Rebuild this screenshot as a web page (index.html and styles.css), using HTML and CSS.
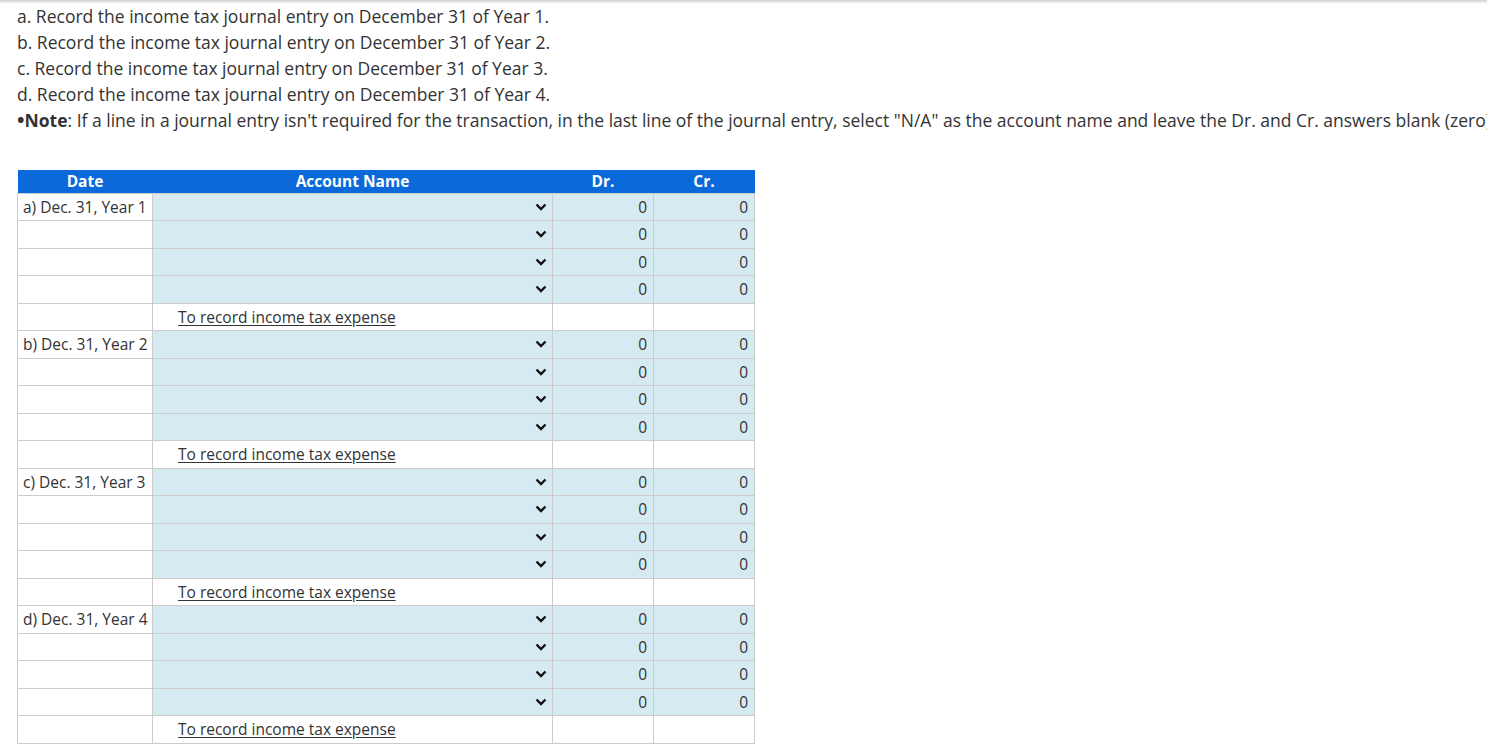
FILE: index.html
```html
<!DOCTYPE html>
<html>
<head>
<meta charset="utf-8">
<link rel="stylesheet" href="styles.css">
</head>
<body>
<div class="topbar"></div>
<div class="page">
  <div class="instructions">
    <p>a. Record the income tax journal entry on December 31 of Year 1.</p>
    <p>b. Record the income tax journal entry on December 31 of Year 2.</p>
    <p>c. Record the income tax journal entry on December 31 of Year 3.</p>
    <p>d. Record the income tax journal entry on December 31 of Year 4.</p>
    <p class="note"><b class="bullet">&bull;</b><b>Note</b>: If a line in a journal entry isn't required for the transaction, in the last line of the journal entry, select "N/A" as the account name and leave the Dr. and Cr. answers blank (zero).</p>
  </div>
  <table class="journal">
    <colgroup><col class="c-date"><col class="c-acct"><col class="c-num"><col class="c-num2"></colgroup>
    <thead>
      <tr><th>Date</th><th>Account Name</th><th>Dr.</th><th>Cr.</th></tr>
    </thead>
    <tbody id="body"></tbody>
  </table>
</div>
<script>
  var labels = ["a) Dec. 31, Year 1","b) Dec. 31, Year 2","c) Dec. 31, Year 3","d) Dec. 31, Year 4"];
  var chev = '<svg class="chev" width="12" height="8" viewBox="0 0 12 8"><polyline points="1.5,1.5 6,6 10.5,1.5" fill="none" stroke="#111" stroke-width="2.4"/></svg>';
  var html = "";
  labels.forEach(function(l){
    for (var i=0;i<4;i++){
      html += '<tr><td class="date">'+(i===0?l:'')+'</td><td class="input acct"><div class="sel">'+chev+'</div></td><td class="input num">0</td><td class="input num">0</td></tr>';
    }
    html += '<tr><td class="date"></td><td class="memo"><span>To record income tax expense</span></td><td></td><td></td></tr>';
  });
  document.getElementById("body").innerHTML = html;
</script>
</body>
</html>
```
FILE: styles.css
```css
html, body { margin: 0; padding: 0; background: #fff; }
body {
  font-family: "Open Sans", "Liberation Sans", sans-serif;
  color: #333;
  overflow: hidden;
}
.topbar {
  height: 4px;
  background: linear-gradient(#cfcfcf, #fff);
  position: absolute;
  left: 0; right: 0; top: 0;
}
.page { padding: 3px 0 0 17px; }
.instructions p {
  margin: 0;
  font-size: 17.5px;
  line-height: 26px;
  white-space: nowrap;
}
.instructions b { font-weight: 700; }
.bullet { font-size: 20px; line-height: 0; }
.journal {
  margin-top: 37px;
  border-collapse: collapse;
  table-layout: fixed;
  width: 737px;
  font-size: 15.5px;
}
.c-date { width: 135px; }
.c-acct { width: 400px; }
.c-num { width: 101px; }
.c-num2 { width: 101px; }
.journal th {
  background: #0b69d9;
  color: #fff;
  font-weight: 700;
  height: 23px;
  padding: 0;
  font-size: 15.5px;
  line-height: 20px;
  border: 0;
  box-sizing: border-box;
}
.journal td {
  border: 1px solid #cccccc;
  height: 27.5px;
  padding: 0;
  box-sizing: border-box;
  line-height: 20px;
}
.journal td.date { padding-left: 5px; white-space: nowrap; }
.journal td.input { background: #d5eaf1; }
.journal td.num { text-align: right; padding-right: 6px; }
.sel {
  display: flex;
  justify-content: flex-end;
  align-items: center;
  padding-right: 5px;
}
.chev { display: block; }
.memo { padding-left: 25px !important; }
.memo span { text-decoration: underline; text-underline-offset: 2px; }
```
